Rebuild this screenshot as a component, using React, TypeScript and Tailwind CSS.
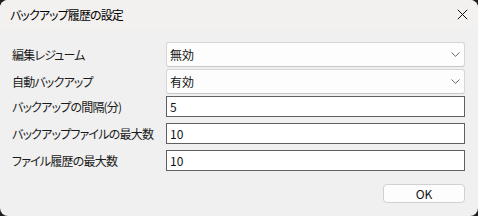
import React from "react";

const font = "font-['Noto_Sans_CJK_JP','Noto_Sans',sans-serif] [font-feature-settings:'palt']";

function Chevron() {
  return (
    <svg width="9" height="5" viewBox="0 0 9 5" className="shrink-0">
      <path d="M0.5 0.5 L4.5 4.3 L8.5 0.5" fill="none" stroke="#5a5a5a" strokeWidth="0.9" />
    </svg>
  );
}

function Combo({ value }: { value: string }) {
  return (
    <div className="w-[299px] h-[25px] bg-[#fdfdfd] border border-[#d6d6d6] border-b-[#c8c8c8] rounded-[3px] flex items-center justify-between pl-[3px] pr-[4px]">
      <span className="text-[12px] leading-none text-[#111]">{value}</span>
      <Chevron />
    </div>
  );
}

function Field({ value }: { value: string }) {
  return (
    <div className="w-[299px] h-[21px] bg-white border border-[#606060] flex items-center pl-[3px]">
      <span className="text-[12px] leading-none text-[#111]">{value}</span>
    </div>
  );
}

function Row({ label, children, cls }: { label: string; children: React.ReactNode; cls: string }) {
  return (
    <div className={`flex items-center ${cls}`}>
      <div className="w-[154px] text-[12px] tracking-[-0.8px] leading-none text-[#1a1a1a] whitespace-nowrap">{label}</div>
      {children}
    </div>
  );
}

export default function App() {
  return (
    <div className={`w-[478px] h-[216px] bg-[#1e1e1e] ${font}`}>
      <div className="w-full h-full rounded-[8px] overflow-hidden bg-[#f0f0f0] flex flex-col">
        <div className="h-[29px] bg-[#f3f1ef] flex items-center justify-between pl-[10px] pr-[10px] shrink-0">
          <span className="text-[12px] tracking-[-0.9px] leading-none text-black">バックアップ履歴の設定</span>
          <svg width="11" height="11" viewBox="0 0 11 11">
            <path d="M0.8 0.8 L10.2 10.2 M10.2 0.8 L0.8 10.2" stroke="#111" strokeWidth="1" fill="none" />
          </svg>
        </div>
        <div className="flex flex-col pl-[12px] pt-[13px]">
          <Row label="編集レジューム" cls="h-[25px]">
            <Combo value="無効" />
          </Row>
          <Row label="自動バックアップ" cls="h-[25px] mt-[2px]">
            <Combo value="有効" />
          </Row>
          <Row label="バックアップの間隔(分)" cls="h-[21px] mt-[2px]">
            <Field value="5" />
          </Row>
          <Row label="バックアップファイルの最大数" cls="h-[21px] mt-[6px]">
            <Field value="10" />
          </Row>
          <Row label="ファイル履歴の最大数" cls="h-[21px] mt-[6px]">
            <Field value="10" />
          </Row>
          <div className="flex justify-end mt-[13px] pr-[13px]">
            <button className="w-[82px] h-[19px] bg-[#fdfdfd] border border-[#d0d0d0] rounded-[4px] flex items-center justify-center text-[12px] leading-none text-[#111]">
              OK
            </button>
          </div>
        </div>
      </div>
    </div>
  );
}
